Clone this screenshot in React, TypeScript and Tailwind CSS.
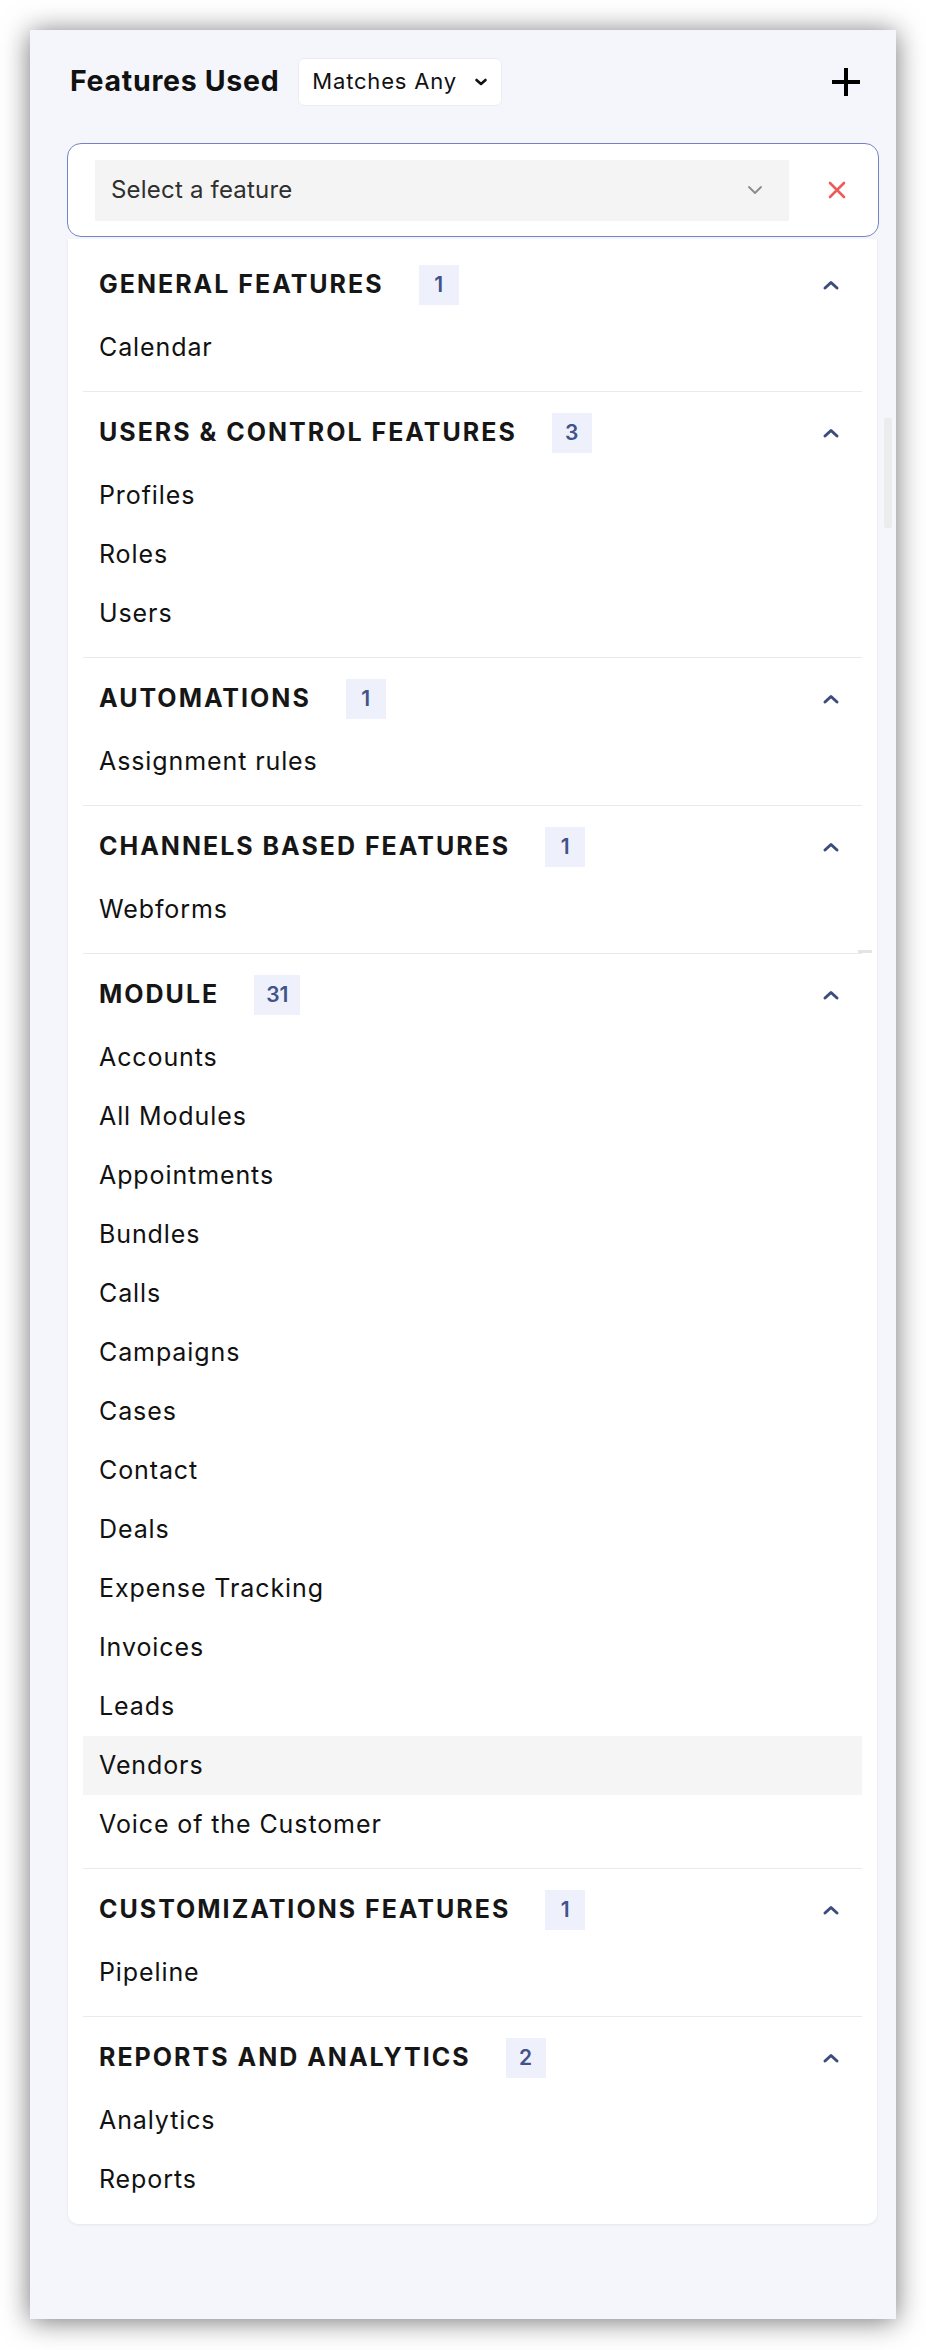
import React from "react";

type Section = { title: string; items: string[] };

const sections: Section[] = [
  { title: "GENERAL FEATURES", items: ["Calendar"] },
  { title: "USERS & CONTROL FEATURES", items: ["Profiles", "Roles", "Users"] },
  { title: "AUTOMATIONS", items: ["Assignment rules"] },
  { title: "CHANNELS BASED FEATURES", items: ["Webforms"] },
  {
    title: "MODULE",
    items: [
      "Accounts",
      "All Modules",
      "Appointments",
      "Bundles",
      "Calls",
      "Campaigns",
      "Cases",
      "Contact",
      "Deals",
      "Expense Tracking",
      "Invoices",
      "Leads",
      "Vendors",
      "Voice of the Customer",
    ],
  },
  { title: "CUSTOMIZATIONS FEATURES", items: ["Pipeline"] },
  { title: "REPORTS AND ANALYTICS", items: ["Analytics", "Reports"] },
];

const countLabels: Record<string, string> = { MODULE: "31" };

const ChevronUp = () => (
  <svg width="18" height="12" viewBox="0 0 18 12" fill="none">
    <path d="M3 9 L9 3.5 L15 9" stroke="#3b4c7d" strokeWidth="3" strokeLinecap="round" strokeLinejoin="round" />
  </svg>
);

const App = () => {
  return (
    <div className="w-[926px] h-[2350px] bg-white pt-[30px] pl-[30px]" style={{ fontFamily: "Inter, 'Noto Sans', sans-serif" }}>
      <div className="relative w-[866px] h-[2289px] bg-[#f5f6fb] shadow-[0_2px_26px_rgba(0,0,0,0.55)] pl-[37px] pr-[17px]">
        {/* header */}
        <div className="flex items-center h-[102px] pt-[1px] pr-[17px]">
          <h2 className="ml-[3px] text-[28.5px] font-bold text-[#111] tracking-[0.7px]">Features Used</h2>
          <button className="ml-[19px] flex items-center h-[48px] px-[13px] bg-white border border-[#eaecf2] rounded-[6px] text-[22px] text-[#111]">
            <span className="tracking-[0.8px]">Matches Any</span>
            <svg className="ml-[17px]" width="14" height="10" viewBox="0 0 14 10" fill="none">
              <path d="M2.5 3 L7 7 L11.5 3" stroke="#111" strokeWidth="2.6" strokeLinecap="round" strokeLinejoin="round" />
            </svg>
          </button>
          <svg className="ml-auto" width="32" height="32" viewBox="0 0 32 32" fill="none">
            <path d="M16 2 V30 M2 16 H30" stroke="#000" strokeWidth="4" />
          </svg>
        </div>

        {/* select */}
        <div className="mt-[11px] w-[812px] h-[94px] bg-white border-[1.5px] border-[#7383c6] rounded-[14px] flex items-center pl-[27px]">
          <div className="w-[694px] h-[61px] bg-[#f4f4f4] flex items-center pl-[16px] pr-[26px]">
            <span className="text-[24px] text-[#2f2f2f] tracking-[0.2px]">Select a feature</span>
            <svg className="ml-auto" width="16" height="10" viewBox="0 0 16 10" fill="none">
              <path d="M2 2 L8 8 L14 2" stroke="#8a8a8a" strokeWidth="1.8" strokeLinecap="round" strokeLinejoin="round" />
            </svg>
          </div>
          <svg className="ml-[39px]" width="18" height="18" viewBox="0 0 18 18" fill="none">
            <path d="M2 2 L16 16 M16 2 L2 16" stroke="#ee5a5a" strokeWidth="2.6" strokeLinecap="round" />
          </svg>
        </div>

        {/* list panel */}
        <div className="mt-[2px] w-[809px] ml-[1px] bg-white rounded-b-[10px] shadow-[0_1px_3px_rgba(30,40,80,0.08)] pt-[5px] pb-[1px]">
          {sections.map((s, idx) => (
            <div
              key={s.title}
              className={
                idx === sections.length - 1
                  ? "mx-[15px] pt-[21px] pb-[14px]"
                  : "mx-[15px] pt-[21px] pb-[14px] border-b border-[#e9eaee]"
              }
            >
              <div className="h-[40px] flex items-center pl-[16px] pr-[22px] mb-[13px]">
                <span className="text-[25px] font-bold text-[#161616] tracking-[2px]">{s.title}</span>
                <span className="ml-[35px] min-w-[40px] h-[40px] px-[12px] flex items-center justify-center bg-[#eef1fc] text-[#42528a] text-[21px] font-semibold">
                  {countLabels[s.title] ?? String(s.items.length)}
                </span>
                <span className="ml-auto">
                  <ChevronUp />
                </span>
              </div>
              {s.items.map((it) => (
                <div
                  key={it}
                  className={
                    it === "Vendors"
                      ? "h-[59px] flex items-center pl-[16px] bg-[#f5f5f5] text-[25px] text-[#111] tracking-[0.9px]"
                      : "h-[59px] flex items-center pl-[16px] text-[25px] text-[#111] tracking-[0.9px]"
                  }
                >
                  {it}
                </div>
              ))}
            </div>
          ))}
        </div>

        {/* scrollbar remnants */}
        <div className="absolute left-[854px] top-[388px] w-[8px] h-[110px] bg-[#ececec] rounded-[2px]" />
        <div className="absolute left-[828px] top-[920px] w-[14px] h-[3px] bg-[#e4e4e4]" />
      </div>
    </div>
  );
};

export default App;
